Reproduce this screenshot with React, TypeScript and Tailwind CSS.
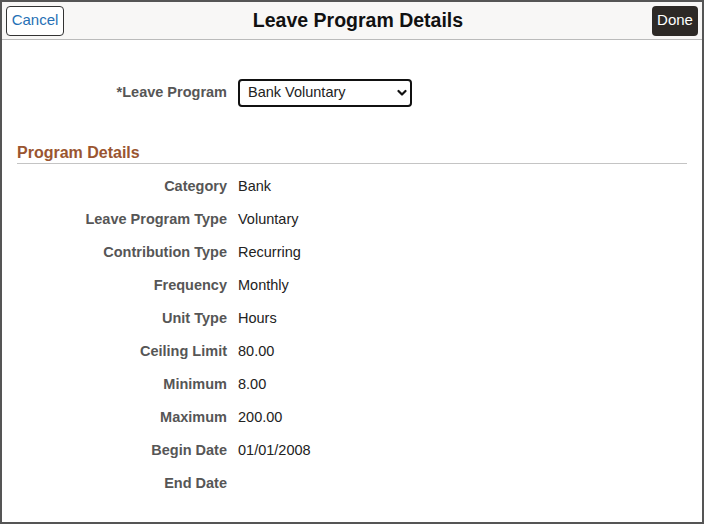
const details: [string, string][] = [
  ['Category', 'Bank'],
  ['Leave Program Type', 'Voluntary'],
  ['Contribution Type', 'Recurring'],
  ['Frequency', 'Monthly'],
  ['Unit Type', 'Hours'],
  ['Ceiling Limit', '80.00'],
  ['Minimum', '8.00'],
  ['Maximum', '200.00'],
  ['Begin Date', '01/01/2008'],
  ['End Date', ''],
];

const Chevron = () => (
  <svg
    className="pointer-events-none absolute right-[5px] top-1/2 h-[8px] w-[10px] -translate-y-1/2"
    viewBox="0 0 10 8"
    fill="none"
  >
    <path d="M1.5 2 5 5.5 8.5 2" stroke="#111" strokeWidth="2.2" strokeLinecap="round" strokeLinejoin="round" />
  </svg>
);

const App = () => {
  return (
    <div className="w-[704px] h-[524px] bg-white border-2 border-[#555] flex flex-col font-['Liberation_Sans',Arial,sans-serif] overflow-hidden">
      {/* header */}
      <div className="h-[38px] shrink-0 flex items-center px-1 bg-[#f8f7f6] border-b border-[#bbb]">
        <button
          type="button"
          className="h-[30px] w-[58px] rounded-[4px] border border-[#333] bg-white text-[15px] text-[#2670b5]"
        >
          Cancel
        </button>
        <h1 className="flex-1 text-center text-[19.5px] font-bold text-[#111]">
          Leave Program Details
        </h1>
        <button
          type="button"
          className="h-[30px] w-[46px] rounded-[4px] bg-[#2d2926] text-[15px] text-white"
        >
          Done
        </button>
      </div>

      {/* body */}
      <div className="flex flex-col text-[14.5px]">
        <div className="mt-[39px] flex items-center gap-[11px]">
          <label className="w-[225px] text-right font-bold text-[#565656]">
            *Leave Program
          </label>
          <div className="relative">
            <select
              defaultValue="bank"
              className="h-[28px] w-[174px] appearance-none rounded-[4px] border-2 border-[#111] bg-white pl-[8px] text-[14.5px] text-[#222] outline-none"
            >
              <option value="bank">Bank Voluntary</option>
            </select>
            <Chevron />
          </div>
        </div>

        <h2 className="mx-[15px] mt-[35px] border-b border-[#c4c4c4] text-[16px] leading-[21px] font-bold text-[#9a5530]">
          Program Details
        </h2>

        <div className="mt-[6px] flex flex-col">
          {details.map(([label, value]) => (
            <div key={label} className="h-[33px] flex items-center gap-[11px]">
              <span className="w-[225px] text-right font-bold text-[#565656]">{label}</span>
              <span className="text-[#222]">{value}</span>
            </div>
          ))}
        </div>
      </div>
    </div>
  );
};

export default App;
